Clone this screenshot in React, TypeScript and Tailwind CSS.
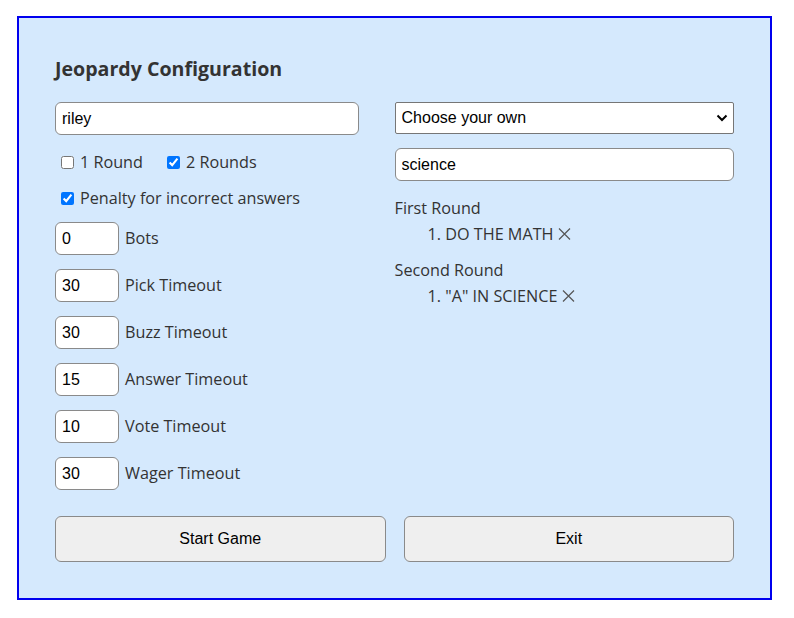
import React from "react";

const label = "font-['Open_Sans',sans-serif] text-[16.2px] text-[#333]";
const inputCls =
  "h-[33px] rounded-[6px] border border-[#8a8a8a] bg-white px-[6px] font-['Liberation_Sans',Arial,sans-serif] text-[16px] text-black outline-none";

function NumRow({ value, text }: { value: string; text: string }) {
  return (
    <div className="flex items-center gap-[6px]">
      <input className={`${inputCls} w-[64px]`} defaultValue={value} />
      <span className={label}>{text}</span>
    </div>
  );
}

function Cross() {
  return (
    <svg className="ml-[5px] inline-block" width="13" height="12" viewBox="0 0 13 12">
      <path d="M1 0.5 L12 11.5 M12 0.5 L1 11.5" fill="none" stroke="#555" strokeWidth="1.2" />
    </svg>
  );
}

export default function App() {
  return (
    <div className="pl-[17px] pt-[16px]">
      <div className="box-border flex h-[584px] w-[755px] flex-col border-2 border-[#0000ee] bg-[#d5e9fd] px-[36px] pt-[37px] pb-[36px]">
        <h2 className="font-['Open_Sans',sans-serif] text-[19.6px] font-bold leading-[28px] text-[#333]">
          Jeopardy Configuration
        </h2>
        <div className="mt-[19px] flex gap-[36px]">
          <div className="flex w-[304px] flex-col">
            <input className={`${inputCls} w-full`} defaultValue="riley" />
            <div className="mt-[15px] flex h-[24px] items-center">
              <label className={`flex items-center gap-[6px] ${label}`}>
                <input type="checkbox" className="m-0 ml-[6px] h-[13px] w-[13px] accent-[#0075ff]" />
                1 Round
              </label>
              <label className={`ml-[24px] flex items-center gap-[6px] ${label}`}>
                <input type="checkbox" defaultChecked className="m-0 h-[13px] w-[13px] accent-[#0075ff]" />
                2 Rounds
              </label>
            </div>
            <div className="mt-[12px] flex h-[24px] items-center">
              <label className={`flex items-center gap-[6px] ${label}`}>
                <input type="checkbox" defaultChecked className="m-0 ml-[6px] h-[13px] w-[13px] accent-[#0075ff]" />
                Penalty for incorrect answers
              </label>
            </div>
            <div className="mt-[12px] flex flex-col gap-[14px]">
              <NumRow value="0" text="Bots" />
              <NumRow value="30" text="Pick Timeout" />
              <NumRow value="30" text="Buzz Timeout" />
              <NumRow value="15" text="Answer Timeout" />
              <NumRow value="10" text="Vote Timeout" />
              <NumRow value="30" text="Wager Timeout" />
            </div>
          </div>
          <div className="flex w-[340px] flex-col">
            <div className="relative h-[32px] w-full">
              <select className="h-[32px] w-full appearance-none rounded-[2px] border border-[#767676] bg-white pl-[6px] font-['Liberation_Sans',Arial,sans-serif] text-[16px] text-black outline-none">
                <option>Choose your own</option>
              </select>
              <svg
                className="pointer-events-none absolute right-[6px] top-[11px]"
                width="12"
                height="10"
                viewBox="0 0 12 10"
              >
                <path d="M1.5 2.5 L6 7 L10.5 2.5" fill="none" stroke="#000" strokeWidth="2" />
              </svg>
            </div>
            <input className={`${inputCls} mt-[14px] w-full`} defaultValue="science" />
            <div className={`mt-[14px] leading-[26px] ${label}`}>
              <div>First Round</div>
              <div className="flex items-center pl-[33px]">
                1. DO THE MATH
                <Cross />
              </div>
              <div className="mt-[10px]">Second Round</div>
              <div className="flex items-center pl-[33px]">
                1. "A" IN SCIENCE
                <Cross />
              </div>
            </div>
          </div>
        </div>
        <div className="mt-auto flex gap-[18px]">
          <button className="h-[46px] w-[331px] rounded-[6px] border border-[#8a8a8a] bg-[#efefef] font-['Liberation_Sans',Arial,sans-serif] text-[16px] text-black">
            Start Game
          </button>
          <button className="h-[46px] w-[331px] rounded-[6px] border border-[#8a8a8a] bg-[#efefef] font-['Liberation_Sans',Arial,sans-serif] text-[16px] text-black">
            Exit
          </button>
        </div>
      </div>
    </div>
  );
}
